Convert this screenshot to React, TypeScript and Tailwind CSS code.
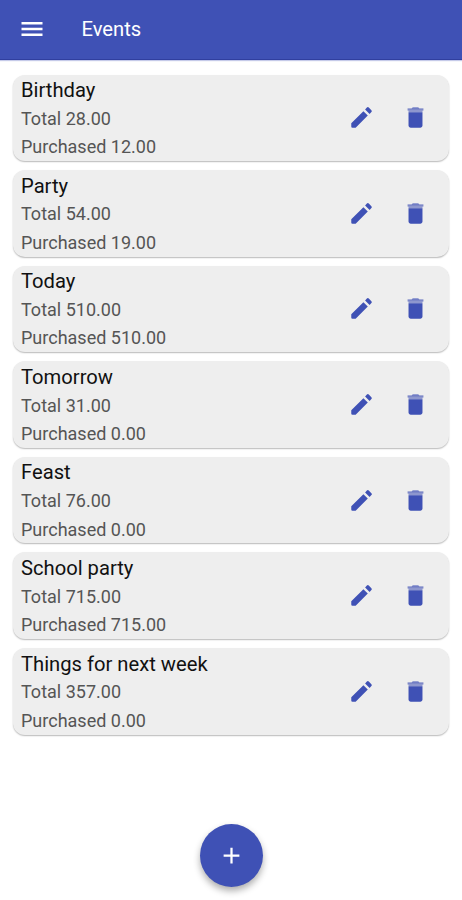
const events = [
  ['Birthday', '28.00', '12.00'],
  ['Party', '54.00', '19.00'],
  ['Today', '510.00', '510.00'],
  ['Tomorrow', '31.00', '0.00'],
  ['Feast', '76.00', '0.00'],
  ['School party', '715.00', '715.00'],
  ['Things for next week', '357.00', '0.00'],
];

function Icon({ d, size }: { d: string; size: number }) {
  return (
    <svg width={size} height={size} viewBox="0 0 24 24" fill="currentColor" aria-hidden="true">
      <path d={d} />
    </svg>
  );
}

function TrashIcon() {
  return (
    <svg width="27" height="27" viewBox="0 0 24 24" fill="currentColor" aria-hidden="true">
      <path d="M5.8 7.3h12.4V19.2c0 1.1-.9 1.9-2 1.9H7.8c-1.1 0-2-.8-2-1.9z" />
      <path d="M15.5 4.1l-1-1.1h-5l-1 1.1z" />
      <path d="M5 4.1h14v1.8h-.8v1.4H5.8V5.9H5z" opacity="0.55" />
      <path d="M5 4.1h14v.7H5z" opacity="0.5" />
    </svg>
  );
}

const MENU = 'M3 18.1h18v-2.2H3v2.2zm0-5h18v-2.2H3v2.2zm0-7.2v2.2h18V5.9H3z';
const EDIT = 'M2.9 17.2V20a1.1 1.1 0 0 0 1.1 1.1h2.8L17.6 10.3l-3.9-3.9L2.9 17.2zM20.8 7.2a1.2 1.2 0 0 0 0-1.7l-2.3-2.3a1.2 1.2 0 0 0-1.7 0l-1.6 1.7 4 4 1.6-1.7z';
const PLUS = 'M19 13h-6v6h-2v-6H5v-2h6V5h2v6h6v2z';

export default function App() {
  return (
    <div className="flex h-[900px] w-[462px] flex-col overflow-hidden bg-white font-[Roboto,sans-serif]">
      <header className="flex h-[60px] shrink-0 items-center border-b border-[#303f9f] bg-[#3f51b5] pb-px pl-[18px] text-white shadow-[0_1px_1px_rgba(63,81,181,0.3)]">
        <button className="block"><Icon d={MENU} size={28} /></button>
        <h1 className="ml-[35.5px] text-[20.2px] leading-6">Events</h1>
      </header>
      <main className="flex flex-col gap-[9.1px] px-[13px] pt-[14.5px]">
        {events.map(([name, total, purchased]) => (
          <section key={name} className="flex h-[86.5px] rounded-[12px] bg-[#eeeeee] pl-2 shadow-[0_1px_1.5px_rgba(0,0,0,0.28)]">
            <div className="flex-1 pt-[1.5px] text-[18px] leading-[28.5px] text-[#555]">
              <h2 className="text-[20.2px] text-[#111]">{name}</h2>
              <p className="pt-[0.3px]">Total {total}</p>
              <p>Purchased {purchased}</p>
            </div>
            <div className="flex items-center gap-[27px] pr-[20px] text-[#3f51b5]">
              <button><Icon d={EDIT} size={27} /></button>
              <button><TrashIcon /></button>
            </div>
          </section>
        ))}
      </main>
      <button className="mx-auto mt-[89px] flex size-[63px] shrink-0 items-center justify-center rounded-full bg-[#3f51b5] text-white shadow-[0_4px_7px_rgba(0,0,0,0.32)]">
        <Icon d={PLUS} size={27} />
      </button>
    </div>
  );
}
